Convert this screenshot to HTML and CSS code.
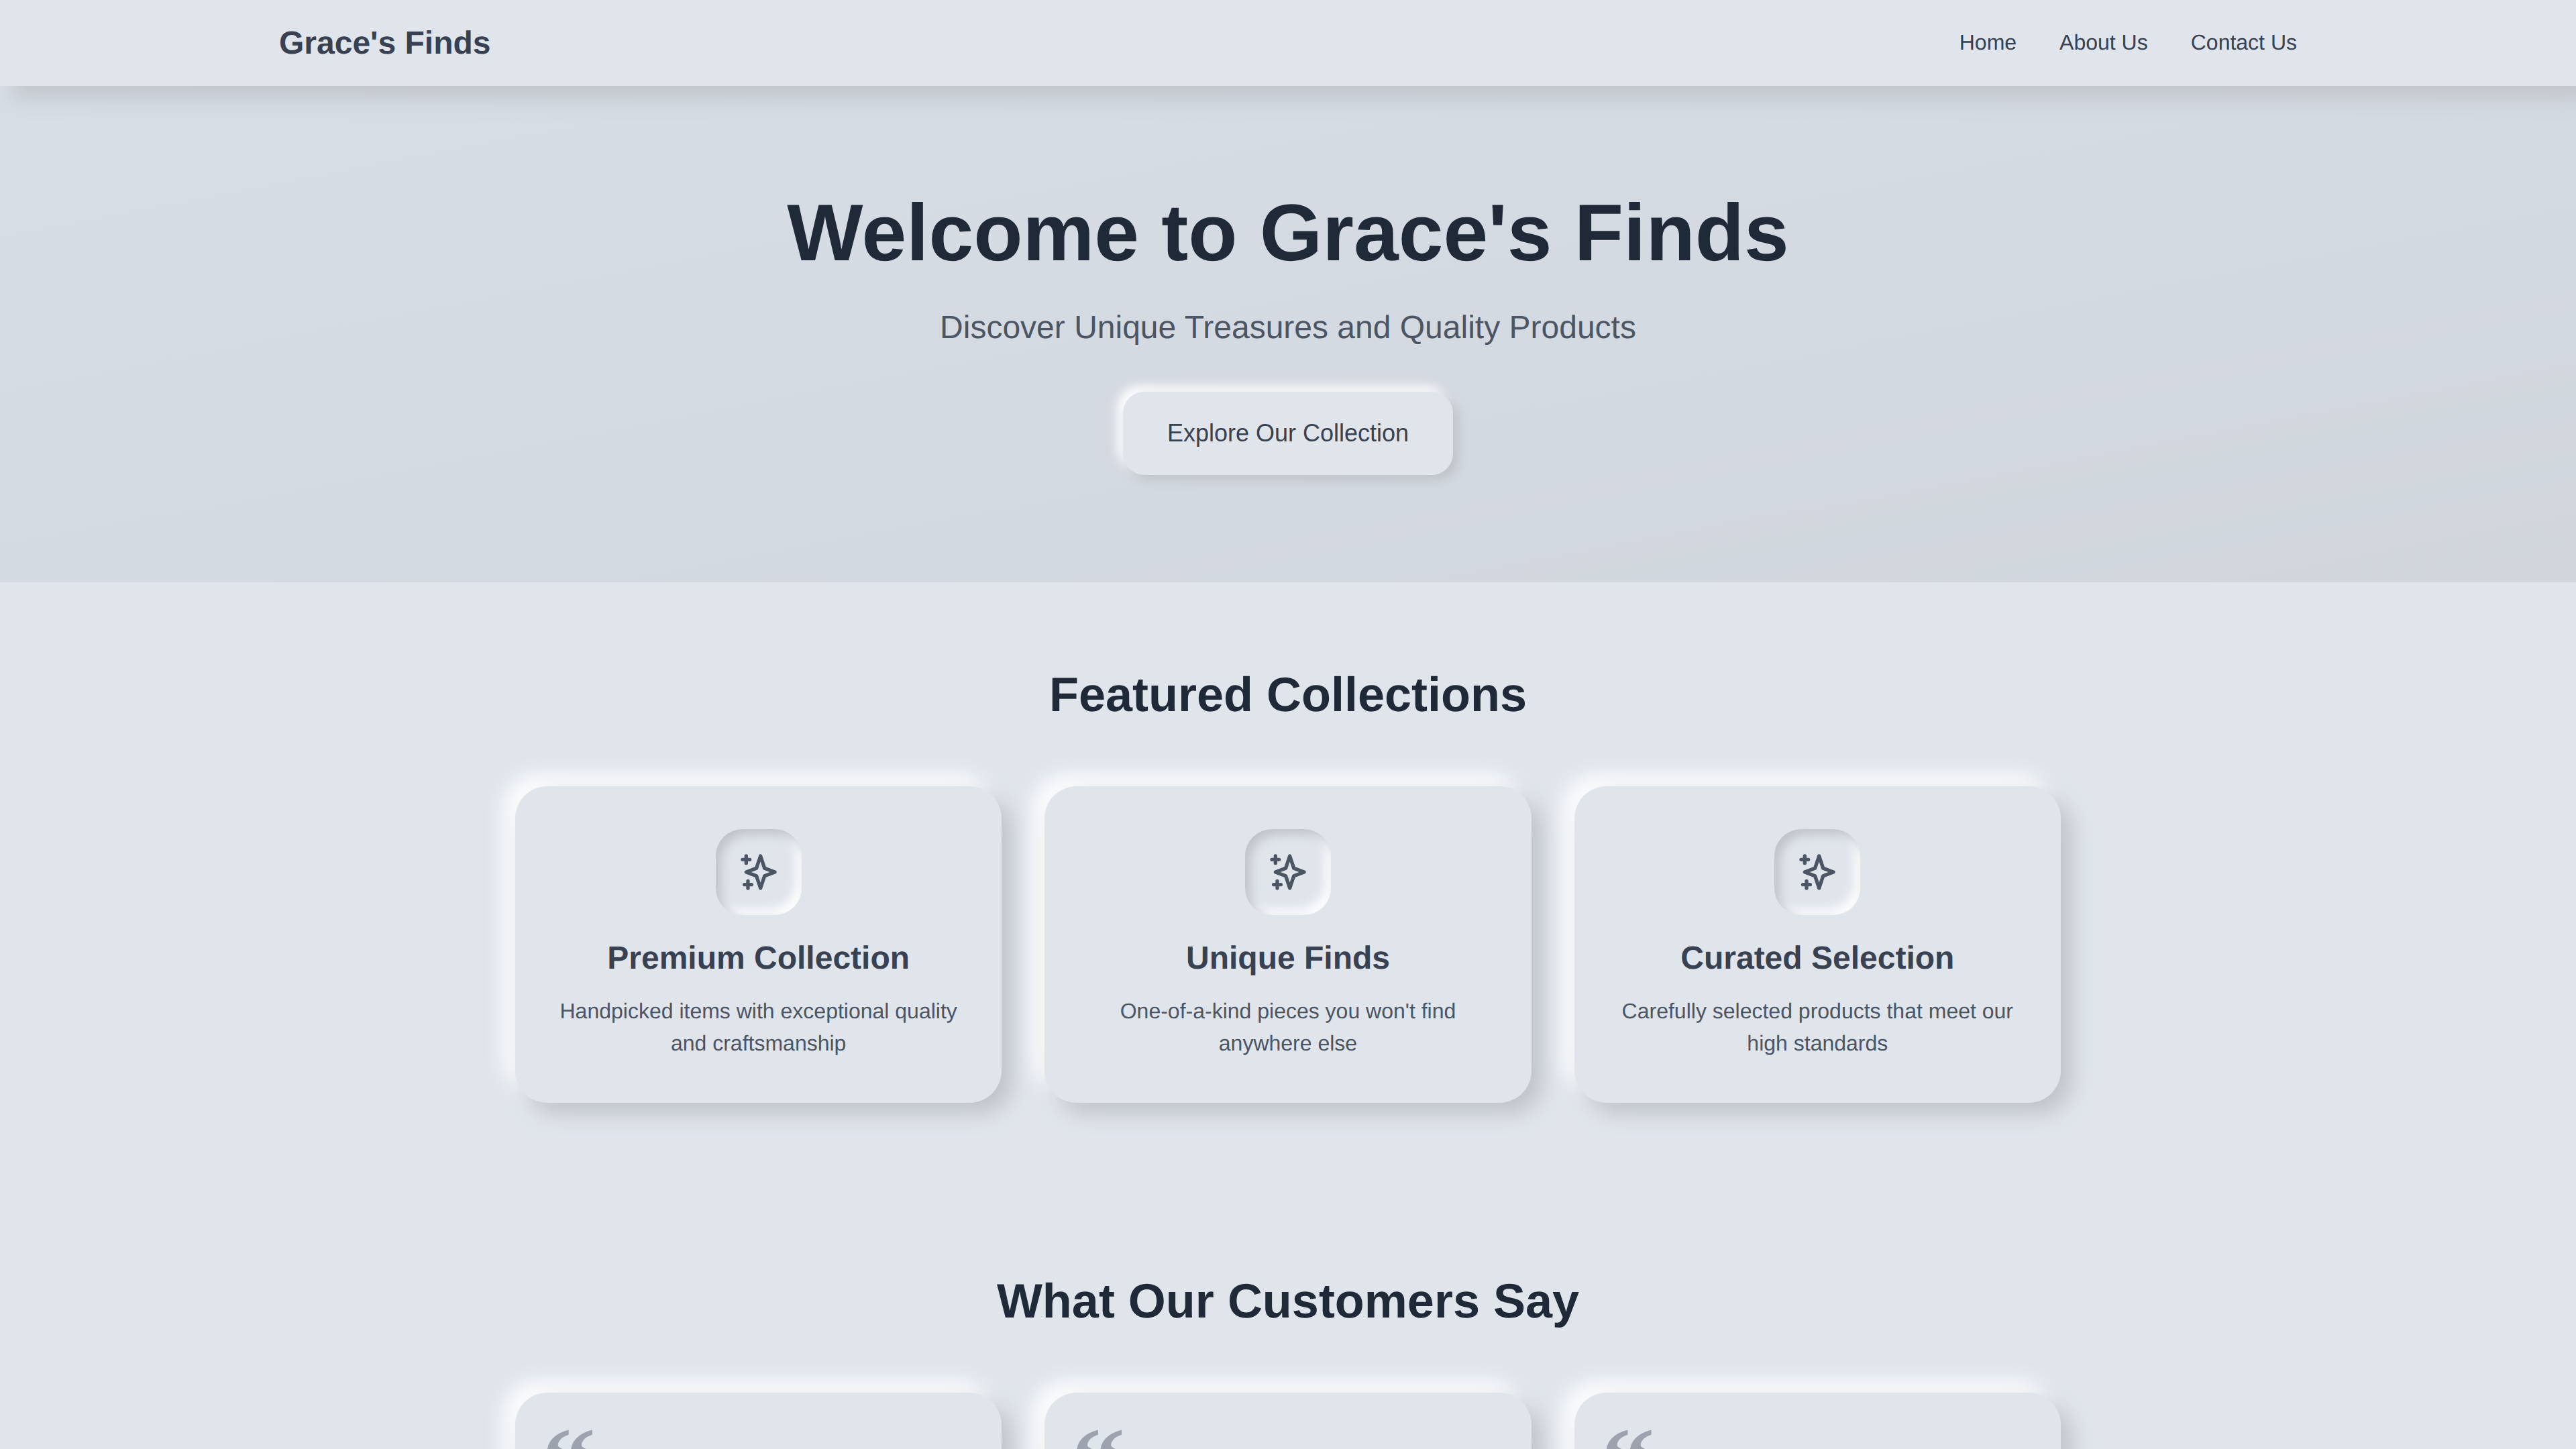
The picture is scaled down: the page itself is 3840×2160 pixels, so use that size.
FILE: index.html
```html
<!DOCTYPE html>
<html lang="en">
<head>
<meta charset="utf-8">
<title>Grace's Finds</title>
<link rel="stylesheet" href="styles.css">
</head>
<body>
<svg class="sprite" aria-hidden="true"><symbol id="sparkles" viewBox="0 0 24 24"><path d="M5 3v4M3 5h4M6 17v4m-2-2h4m5-16l2.286 6.857L21 12l-5.714 2.143L13 21l-2.286-6.857L5 12l5.714-2.143L13 3z" fill="none" stroke="currentColor" stroke-width="2" stroke-linecap="round" stroke-linejoin="round"/></symbol></svg>
<header class="nav">
  <div class="nav-inner">
    <a class="logo">Grace's Finds</a>
    <nav class="links"><a>Home</a><a>About Us</a><a>Contact Us</a></nav>
  </div>
</header>
<section class="hero">
  <h1>Welcome to Grace's Finds</h1>
  <p class="sub">Discover Unique Treasures and Quality Products</p>
  <button class="cta">Explore Our Collection</button>
</section>
<section class="section">
  <h2>Featured Collections</h2>
  <div class="grid">
    <article class="card feature">
      <div class="icon"><svg><use href="#sparkles"/></svg></div>
      <h3>Premium Collection</h3>
      <p>Handpicked items with exceptional quality and craftsmanship</p>
    </article>
    <article class="card feature">
      <div class="icon"><svg><use href="#sparkles"/></svg></div>
      <h3>Unique Finds</h3>
      <p>One-of-a-kind pieces you won't find anywhere else</p>
    </article>
    <article class="card feature">
      <div class="icon"><svg><use href="#sparkles"/></svg></div>
      <h3>Curated Selection</h3>
      <p>Carefully selected products that meet our high standards</p>
    </article>
  </div>
</section>
<section class="section">
  <h2>What Our Customers Say</h2>
  <div class="grid">
    <article class="card quote"><span class="mark">“</span></article>
    <article class="card quote"><span class="mark">“</span></article>
    <article class="card quote"><span class="mark">“</span></article>
  </div>
</section>
</body>
</html>
```
FILE: styles.css
```css
* { box-sizing: border-box; margin: 0; padding: 0; }
html, body { height: 100vh; overflow: hidden; }
body { background: #e0e5ec; font-family: "Liberation Sans", Arial, sans-serif; color: #374151; text-rendering: geometricPrecision; }
.sprite { display: none; }

.nav { position: relative; z-index: 2; height: 128px; background: #e0e5ec; box-shadow: 16px 16px 32px #bec3c9, -16px -16px 32px #ffffff; }
.nav-inner { max-width: 3072px; height: 100%; margin: 0 auto; padding: 0 32px; display: flex; align-items: center; justify-content: space-between; }
.logo { font-size: 48px; line-height: 64px; padding-top: 2px; font-weight: 700; color: #374151; }
.links { display: flex; gap: 64px; font-size: 32px; line-height: 48px; padding-bottom: 2px; color: #374151; }

.hero { height: 740px; padding-top: 160px; text-align: center; background: linear-gradient(to bottom right, #d8dee6, #d1d6dd); display: flex; flex-direction: column; align-items: center; }
h1 { font-size: 120px; line-height: 118px; font-weight: 700; color: #1f2937; margin-bottom: 51px; }
.sub { font-size: 48px; line-height: 64px; color: #4b5563; margin-bottom: 63px; }
.cta { font: inherit; font-size: 36px; line-height: 56px; color: #374151; padding: 32px 64px; background: #e0e5ec; border: 2px solid #e0e5ec; border-radius: 32px; box-shadow: 8px 8px 16px #bec3c9, -8px -8px 16px #ffffff; }

.section { padding-top: 128px; padding-bottom: 128px; }
h2 { font-size: 72px; line-height: 80px; font-weight: 700; color: #1f2937; text-align: center; margin-bottom: 96px; }
.grid { width: 2304px; margin: 0 auto; display: grid; grid-template-columns: repeat(3, 1fr); gap: 64px; }
.card { background: #e0e5ec; border-radius: 48px; box-shadow: 16px 16px 32px #bec3c9, -16px -16px 32px #ffffff; }
.feature { padding: 64px 64px 65px; text-align: center; }
.icon { width: 128px; height: 128px; margin: 0 auto 33px; border-radius: 40px; display: flex; align-items: center; justify-content: center; color: #4b5563; background: #e0e5ec; box-shadow: inset 8px 8px 16px #bec3c9, inset -8px -8px 16px #ffffff; }
.icon svg { width: 64px; height: 64px; }
h3 { font-size: 48px; line-height: 64px; font-weight: 700; color: #374151; margin-bottom: 22px; }
.feature p { font-size: 32px; line-height: 48px; color: #4b5563; }
.quote { padding: 28px 40px; min-height: 480px; }
.mark { display: block; font-family: "Liberation Serif", serif; font-weight: 700; font-size: 160px; line-height: 160px; color: #9ca3af; }
```
